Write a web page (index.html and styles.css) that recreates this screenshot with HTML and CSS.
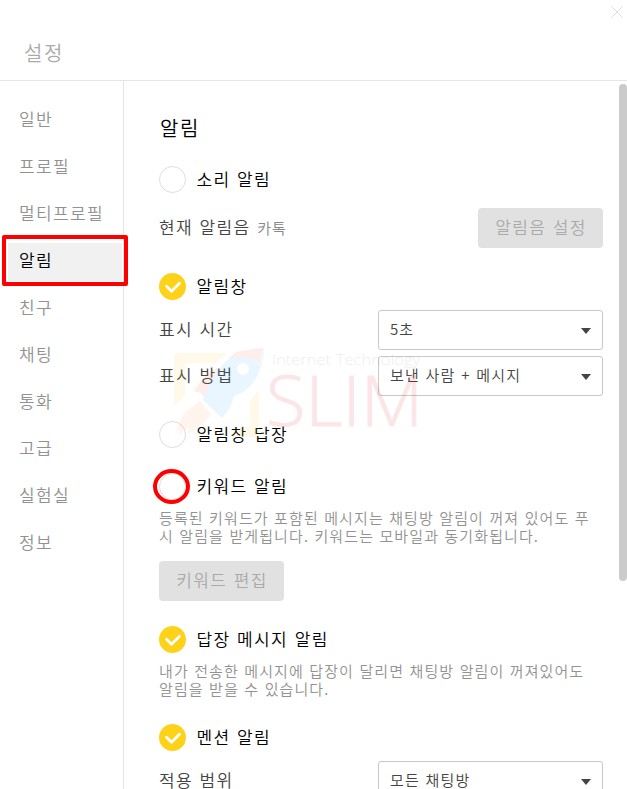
FILE: index.html
```
<!DOCTYPE html>
<html lang="ko">
<head>
  <meta charset="UTF-8">
  <meta name="viewport" content="width=device-width, initial-scale=1.0">
  <title>설정</title>
  <link rel="stylesheet" href="styles.css">
</head>
<body>

<header class="header">
  <h1>설정</h1>
  <svg class="close" viewBox="0 0 12 12"><path d="M.5 .5l11 11M11.5 .5l-11 11"/></svg>
</header>

<div class="layout">
  <nav class="sidebar">
    <a>일반</a>
    <a>프로필</a>
    <a>멀티프로필</a>
    <a class="active"><span>알림</span></a>
    <a>친구</a>
    <a>채팅</a>
    <a>통화</a>
    <a>고급</a>
    <a>실험실</a>
    <a>정보</a>
  </nav>

  <main class="content">
    <h2>알림</h2>

    <div class="toggle"><i class="check"></i><span>소리 알림</span></div>
    <div class="row sound">
      <span>현재 알림음 <small>카톡</small></span>
      <button class="btn">알림음 설정</button>
    </div>

    <div class="toggle popup">
      <svg class="check on" viewBox="0 0 27 27"><path d="M7.5 13.2l5 5 8-8"/></svg>
      <span>알림창</span>
    </div>
    <div class="row">
      <span>표시 시간</span>
      <div class="select">5초</div>
    </div>
    <div class="row method">
      <span>표시 방법</span>
      <div class="select">보낸 사람 + 메시지</div>
    </div>

    <div class="toggle reply"><i class="check"></i><span>알림창 답장</span></div>
    <div class="toggle keyword"><i class="check"></i><span>키워드 알림</span></div>
    <p class="desc">등록된 키워드가 포함된 메시지는 채팅방 알림이 꺼져 있어도 푸<br>시 알림을 받게됩니다. 키워드는 모바일과 동기화됩니다.</p>
    <button class="btn edit">키워드 편집</button>

    <div class="toggle answer">
      <svg class="check on" viewBox="0 0 27 27"><path d="M7.5 13.2l5 5 8-8"/></svg>
      <span>답장 메시지 알림</span>
    </div>
    <p class="desc">내가 전송한 메시지에 답장이 달리면 채팅방 알림이 꺼져있어도<br>알림을 받을 수 있습니다.</p>

    <div class="toggle mention">
      <svg class="check on" viewBox="0 0 27 27"><path d="M7.5 13.2l5 5 8-8"/></svg>
      <span>멘션 알림</span>
    </div>
    <div class="row range">
      <span>적용 범위</span>
      <div class="select">모든 채팅방</div>
    </div>
  </main>
  <div class="scrollbar"></div>
</div>

<!-- watermark -->
<svg class="watermark" viewBox="0 0 260 90">
  <path fill="#ffcc33" d="M8 4H57L45 14H15V47L4 57V8Q4 4 8 4ZM89 41V84Q89 88 85 88H60L70 78H80V52Z"/>
  <path fill="#f06050" d="M57 18Q44 18 38 24Q30 32 24 42L31 44L35 49Z"/>
  <path fill="#30a8ff" fill-rule="evenodd" d="M94 -1Q92 5 90 16Q80 4 62 8Q48 18 40 34L33 51L52 69L60 59L64 47Q77 42 83 34Q93 20 94 -1ZM73 14A6 6 0 1 1 73 26A6 6 0 1 1 73 14Z"/>
  <path fill="#f06050" d="M94 -1Q78 0 66 3L58 10Q80 4 90 15Q90 7 94 -1Z"/>
  <path fill="#ffa060" d="M30 52L15 63Q9 72 5 86L10 79L9 86L19 77L17 85Q32 79 41 65Z"/>
  <text class="tech" x="102" y="16" textLength="148" lengthAdjust="spacingAndGlyphs">Internet Technology</text>
  <text class="slim" x="96" y="77" textLength="157" lengthAdjust="spacingAndGlyphs">SLIM</text>
</svg>

<div class="mark-box"></div>
<div class="mark-circle"></div>

</body>
</html>
```

FILE: styles.css
```
* {
  box-sizing: border-box;
}
body {
  margin: 0;
  height: 789px;
  overflow: hidden;
  position: relative;
  background: #fff;
  color: #444;
  font-family: "Noto Sans CJK KR", sans-serif;
  font-size: 17px;
  font-weight: 350;
  letter-spacing: 1.36px;
  word-spacing: 0.5px;
}
h1, h2, p {
  margin: 0;
  font-weight: 350;
}
.header {
  display: flex;
  justify-content: space-between;
  height: 81px;
  padding: 6px 4px 0 24px;
  border-bottom: 1px solid #e5e5e5;
}
.header h1 {
  padding-top: 33px;
  font-size: 20px;
  line-height: 28px;
  letter-spacing: 1.6px;
  color: #aaa;
}
.close {
  width: 12px;
  height: 12px;
  fill: none;
  stroke: #ddd;
}
.layout {
  display: flex;
  height: 708px;
}
.sidebar {
  display: flex;
  flex-direction: column;
  width: 124px;
  padding-top: 15px;
  border-right: 1px solid #e5e5e5;
}
.sidebar a {
  flex: none;
  height: 47px;
  padding-left: 19px;
  line-height: 46px;
  color: #929292;
}
.sidebar .active {
  padding: 6px 1px 3px 8px;
  color: #000;
}
.active span {
  display: block;
  height: 38px;
  padding-left: 11px;
  line-height: 34px;
  background: #f1f1f1;
}
.content {
  width: 479px;
  height: 708px;
  padding: 32px 0 0 35px;
  overflow: hidden;
}
.content h2 {
  height: 53px;
  padding-left: 1px;
  font-size: 20px;
  line-height: 29px;
  letter-spacing: 1.6px;
  color: #000;
}
.toggle {
  display: flex;
  gap: 10.5px;
  height: 27px;
  line-height: 25px;
  color: #000;
}
.check {
  flex: none;
  width: 27px;
  height: 27px;
  border: 1px solid #ddd;
  border-radius: 50%;
}
.check.on {
  border: 0;
  background: #ffd21a;
  fill: none;
  stroke: #fff;
  stroke-width: 2.8;
  stroke-linecap: round;
  stroke-linejoin: round;
}
.row {
  display: flex;
  justify-content: space-between;
  height: 40px;
  line-height: 37px;
}
.row small {
  font-size: 15px;
  letter-spacing: 1px;
  color: #888;
}
.btn {
  width: 125px;
  height: 40px;
  padding: 0 0 3px 1px;
  border: 0;
  border-radius: 4px;
  background: #e1e1e1;
  color: #aaa;
  font: inherit;
  letter-spacing: inherit;
  word-spacing: inherit;
}
.select {
  display: flex;
  justify-content: space-between;
  align-items: center;
  width: 225px;
  height: 40px;
  padding: 0 11px 3px 11px;
  border: 1px solid #c8c8c8;
  border-radius: 3px;
  font-size: 15px;
  letter-spacing: 1.1px;
}
.select::after {
  content: "";
  margin-top: 4px;
  border: 5px solid transparent;
  border-top: 6px solid #444;
  border-bottom: 0;
}
.desc {
  padding-top: 9px;
  font-size: 15px;
  line-height: 18px;
  letter-spacing: 1.08px;
  word-spacing: 0.2px;
  white-space: nowrap;
  color: #929292;
}
.sound {
  margin-top: 15px;
}
.popup {
  margin: 25px 0 10px;
}
.method {
  margin-top: 6px;
}
.reply {
  margin-top: 25px;
}
.keyword {
  margin-top: 25px;
}
.edit {
  display: block;
  margin-top: 16px;
}
.answer {
  margin-top: 25px;
}
.mention {
  margin-top: 26px;
}
.range {
  margin-top: 10px;
}
.scrollbar {
  width: 8px;
  height: 497px;
  margin: 3px 0 0 16px;
  border-radius: 4px;
  background: #cbcbcb;
}
.watermark {
  position: absolute;
  left: 170px;
  top: 349px;
  width: 260px;
  height: 90px;
  opacity: 0.1;
  overflow: visible;
  letter-spacing: 0;
}
.tech {
  font: 300 15px "Open Sans", sans-serif;
  fill: #555;
}
.slim {
  font: 300 70px "Open Sans", sans-serif;
  fill: #e01020;
  stroke: #e01020;
}
.mark-box {
  position: absolute;
  left: 2px;
  top: 235px;
  width: 126px;
  height: 51px;
  border: 4px solid #f00;
  border-radius: 2px;
}
.mark-circle {
  position: absolute;
  left: 153px;
  top: 469px;
  width: 37px;
  height: 35px;
  border: 4px solid #f00;
  border-radius: 50%;
}
```
